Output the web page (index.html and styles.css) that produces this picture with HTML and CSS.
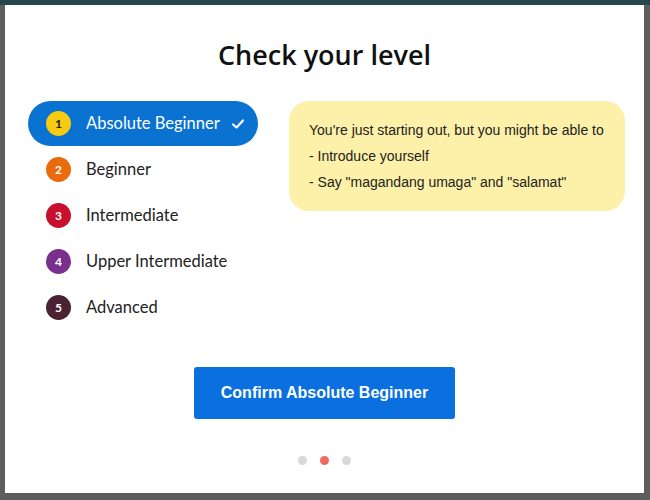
FILE: index.html
```html
<!DOCTYPE html>
<html>
    <head>
        <title>Check your level</title>
        <link rel="stylesheet" href="styles.css">
    </head>
    <body>
        <div class="backdrop">
          <div class="modal">
            <h1>Check your level</h1>
            <div class="level-body">
              <ul class="levels">
                <li class="level selected">
                  <span class="num n1">1</span>
                  <span class="name">Absolute Beginner</span>
                  <svg class="check" width="14" height="12" viewBox="0 0 14 12"><path d="M2 6.5 L5.5 9.5 L12 2.5" fill="none" stroke="#fff" stroke-width="2.2" stroke-linecap="round" stroke-linejoin="round"/></svg>
                </li>
                <li class="level">
                  <span class="num n2">2</span>
                  <span class="name">Beginner</span>
                </li>
                <li class="level">
                  <span class="num n3">3</span>
                  <span class="name">Intermediate</span>
                </li>
                <li class="level">
                  <span class="num n4">4</span>
                  <span class="name">Upper Intermediate</span>
                </li>
                <li class="level">
                  <span class="num n5">5</span>
                  <span class="name">Advanced</span>
                </li>
              </ul>
              <div class="info">
                <p>You're just starting out, but you might be able to</p>
                <p>- Introduce yourself</p>
                <p>- Say "magandang umaga" and "salamat"</p>
              </div>
            </div>
            <button type="button" class="confirm">Confirm Absolute Beginner</button>
            <div class="dots">
              <span class="dot"></span>
              <span class="dot active"></span>
              <span class="dot"></span>
            </div>
          </div>
        </div>
    </body>
</html>
```

FILE: styles.css
```css
body {
  margin: 0;
  background: linear-gradient(#27464c 0, #27464c 5px, #5d5d5d 5px);
  font-family: Lato, sans-serif;
  height: 500px;
  overflow: hidden;
}
.backdrop {
  padding: 5px 6px 0 5px;
}
.modal {
  background: #fff;
  height: 488px;
  box-sizing: border-box;
  padding-top: 34px;
  display: flex;
  flex-direction: column;
  align-items: center;
}
h1 {
  margin: 0;
  font-family: "Open Sans", sans-serif;
  font-size: 27px;
  line-height: 32px;
  font-weight: 600;
  color: #111;
  text-align: center;
}
.level-body {
  align-self: stretch;
  display: flex;
  justify-content: space-between;
  margin-top: 30px;
  padding: 0 19px 0 23px;
}
.levels {
  list-style: none;
  margin: 0;
  padding: 0;
  width: 230px;
}
.level {
  display: flex;
  align-items: center;
  height: 45px;
  margin-bottom: 1px;
  padding-left: 18px;
  border-radius: 23px;
  font-size: 16.5px;
  color: #222;
}
.level .name {
  margin-top: -2px;
}
.level.selected {
  background: #0a72d0;
  color: #fff;
}
.num {
  width: 25px;
  height: 25px;
  border-radius: 50%;
  display: flex;
  align-items: center;
  justify-content: center;
  font-size: 12px;
  font-weight: 700;
  color: #fff;
  margin-right: 15px;
}
.n1 { background: #f7cb10; color: #222; }
.n2 { background: #ea6a0e; }
.n3 { background: #c8102e; }
.n4 { background: #7b2f8c; }
.n5 { background: #4a2231; }
.check {
  margin-left: 11px;
}
.info {
  width: 336px;
  height: 110px;
  box-sizing: border-box;
  padding: 16px 20px;
  background: #fdf0a8;
  border-radius: 20px;
  font-family: "Liberation Sans", Arial, sans-serif;
  font-size: 14px;
  color: #222;
}
.info p {
  margin: 0;
  line-height: 26px;
}
.confirm {
  margin-top: 36px;
  width: 261px;
  height: 52px;
  border: none;
  border-radius: 3px;
  background: #0a6fdf;
  color: #fff;
  font-family: "Liberation Sans", Arial, sans-serif;
  font-size: 16px;
  font-weight: 700;
  cursor: pointer;
}
.dots {
  display: flex;
  gap: 13px;
  margin-top: 37px;
}
.dot {
  width: 9px;
  height: 9px;
  border-radius: 50%;
  background: #d9d9d9;
}
.dot.active {
  background: #f06a60;
}
```
